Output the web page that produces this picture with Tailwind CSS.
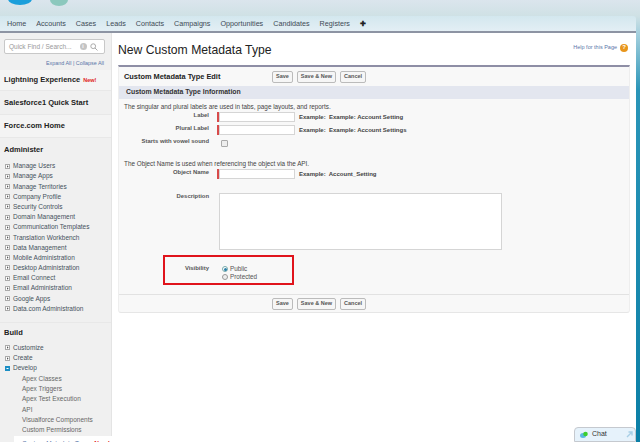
<!doctype html>
<html><head><meta charset="utf-8"><script src="https://cdn.jsdelivr.net/npm/@tailwindcss/browser@4"></script></head>
<body class="m-0">
<div class="relative w-[640px] h-[442px] overflow-hidden flex flex-col font-['Liberation_Sans',Arial,sans-serif] text-[6.35px] text-[#333] bg-[linear-gradient(180deg,#dbe5ed_0px,#cfe1e5_16px,#a9d2df_32px,#2a95b8_90px,#0b7fa6_442px)]">
  <div class="h-[16px] shrink-0 relative">
    <svg class="absolute left-[8px] top-0" width="64" height="7" viewBox="0 0 64 7"><ellipse cx="12" cy="-1" rx="12" ry="6" fill="#1b9fdb"/><ellipse cx="51" cy="0" rx="9" ry="6" fill="#8cc8bd"/></svg>
  </div>
  <div class="h-[17px] shrink-0 mr-[4px] rounded-tr-[3px] bg-gradient-to-b from-[#d3e7ee] to-[#e3eff5] border-b-2 border-[#8d94a3] flex items-center pl-[7px] pt-[1px] gap-[10px] text-[7.2px] text-[#3d4a55]">
    <span>Home</span><span>Accounts</span><span>Cases</span><span>Leads</span><span>Contacts</span><span>Campaigns</span><span>Opportunities</span><span>Candidates</span><span>Registers</span><span class="font-bold text-[#222]">✚</span>
  </div>
  <div class="flex-1 mr-[4px] flex min-h-0 bg-white">
    <aside class="w-[112px] shrink-0 bg-[#f0f0f0] border-r border-[#e4e4e4] flex flex-col">
      <div class="h-[37px] shrink-0 px-[4px] pt-[6px]">
        <div class="h-[15px] w-[101px] bg-white border border-[#c8c8c8] rounded-[2px] flex items-center pl-[4px] text-[#999] text-[6.5px] whitespace-nowrap">Quick Find / Search...
          <span class="ml-[8px] w-[7px] h-[7px] shrink-0 rounded-full bg-[#c4c4c4] text-white text-[5px] font-bold flex items-center justify-center">i</span>
          <svg class="ml-[3px] shrink-0" width="8" height="8" viewBox="0 0 8 8" fill="none" stroke="#aaa" stroke-width="1"><circle cx="3.2" cy="3.2" r="2.4"/><path d="M5 5l2.5 2.5"/></svg>
        </div>
        <div class="text-right pr-[3px] text-[5.4px] text-[#5a76a8] mt-[5px] whitespace-nowrap">Expand All | Collapse All</div>
      </div>
      <div class="h-[21px] shrink-0 flex items-center pl-[4px] text-[7.5px] font-bold text-[#222] border-b border-[#e8e8e8] bg-[#f4f4f4]">Lightning Experience<span class="ml-[3px] text-[5.5px] text-[#e02020]">New!</span></div>
      <div class="h-[24px] shrink-0 flex items-center pl-[4px] text-[7.5px] font-bold text-[#222] border-b border-[#e8e8e8]">Salesforce1 Quick Start</div>
      <div class="h-[23px] shrink-0 flex items-center pl-[4px] text-[7.5px] font-bold text-[#222] border-b border-[#e8e8e8] bg-[#f4f4f4]">Force.com Home</div>
      <div class="h-[23px] shrink-0 flex items-center pl-[4px] text-[7.5px] font-bold text-[#222]">Administer</div>
      <ul class="flex flex-col text-[6.5px] text-[#45505c] pb-[8px] border-b border-[#e8e8e8]">
        <li class="h-[10.2px] flex items-center pl-[5px] gap-[3px]"><svg class="shrink-0" width="5" height="5" viewBox="0 0 5 5"><rect x=".5" y=".5" width="4" height="4" fill="#fff" stroke="#aaa" stroke-width="1"/><path d="M2 1.2L3.6 2.5 2 3.8z" fill="#555"/></svg>Manage Users</li>
        <li class="h-[10.2px] flex items-center pl-[5px] gap-[3px]"><svg class="shrink-0" width="5" height="5" viewBox="0 0 5 5"><rect x=".5" y=".5" width="4" height="4" fill="#fff" stroke="#aaa" stroke-width="1"/><path d="M2 1.2L3.6 2.5 2 3.8z" fill="#555"/></svg>Manage Apps</li>
        <li class="h-[10.2px] flex items-center pl-[5px] gap-[3px]"><svg class="shrink-0" width="5" height="5" viewBox="0 0 5 5"><rect x=".5" y=".5" width="4" height="4" fill="#fff" stroke="#aaa" stroke-width="1"/><path d="M2 1.2L3.6 2.5 2 3.8z" fill="#555"/></svg>Manage Territories</li>
        <li class="h-[10.2px] flex items-center pl-[5px] gap-[3px]"><svg class="shrink-0" width="5" height="5" viewBox="0 0 5 5"><rect x=".5" y=".5" width="4" height="4" fill="#fff" stroke="#aaa" stroke-width="1"/><path d="M2 1.2L3.6 2.5 2 3.8z" fill="#555"/></svg>Company Profile</li>
        <li class="h-[10.2px] flex items-center pl-[5px] gap-[3px]"><svg class="shrink-0" width="5" height="5" viewBox="0 0 5 5"><rect x=".5" y=".5" width="4" height="4" fill="#fff" stroke="#aaa" stroke-width="1"/><path d="M2 1.2L3.6 2.5 2 3.8z" fill="#555"/></svg>Security Controls</li>
        <li class="h-[10.2px] flex items-center pl-[5px] gap-[3px]"><svg class="shrink-0" width="5" height="5" viewBox="0 0 5 5"><rect x=".5" y=".5" width="4" height="4" fill="#fff" stroke="#aaa" stroke-width="1"/><path d="M2 1.2L3.6 2.5 2 3.8z" fill="#555"/></svg>Domain Management</li>
        <li class="h-[10.2px] flex items-center pl-[5px] gap-[3px]"><svg class="shrink-0" width="5" height="5" viewBox="0 0 5 5"><rect x=".5" y=".5" width="4" height="4" fill="#fff" stroke="#aaa" stroke-width="1"/><path d="M2 1.2L3.6 2.5 2 3.8z" fill="#555"/></svg>Communication Templates</li>
        <li class="h-[10.2px] flex items-center pl-[5px] gap-[3px]"><svg class="shrink-0" width="5" height="5" viewBox="0 0 5 5"><rect x=".5" y=".5" width="4" height="4" fill="#fff" stroke="#aaa" stroke-width="1"/><path d="M2 1.2L3.6 2.5 2 3.8z" fill="#555"/></svg>Translation Workbench</li>
        <li class="h-[10.2px] flex items-center pl-[5px] gap-[3px]"><svg class="shrink-0" width="5" height="5" viewBox="0 0 5 5"><rect x=".5" y=".5" width="4" height="4" fill="#fff" stroke="#aaa" stroke-width="1"/><path d="M2 1.2L3.6 2.5 2 3.8z" fill="#555"/></svg>Data Management</li>
        <li class="h-[10.2px] flex items-center pl-[5px] gap-[3px]"><svg class="shrink-0" width="5" height="5" viewBox="0 0 5 5"><rect x=".5" y=".5" width="4" height="4" fill="#fff" stroke="#aaa" stroke-width="1"/><path d="M2 1.2L3.6 2.5 2 3.8z" fill="#555"/></svg>Mobile Administration</li>
        <li class="h-[10.2px] flex items-center pl-[5px] gap-[3px]"><svg class="shrink-0" width="5" height="5" viewBox="0 0 5 5"><rect x=".5" y=".5" width="4" height="4" fill="#fff" stroke="#aaa" stroke-width="1"/><path d="M2 1.2L3.6 2.5 2 3.8z" fill="#555"/></svg>Desktop Administration</li>
        <li class="h-[10.2px] flex items-center pl-[5px] gap-[3px]"><svg class="shrink-0" width="5" height="5" viewBox="0 0 5 5"><rect x=".5" y=".5" width="4" height="4" fill="#fff" stroke="#aaa" stroke-width="1"/><path d="M2 1.2L3.6 2.5 2 3.8z" fill="#555"/></svg>Email Connect</li>
        <li class="h-[10.2px] flex items-center pl-[5px] gap-[3px]"><svg class="shrink-0" width="5" height="5" viewBox="0 0 5 5"><rect x=".5" y=".5" width="4" height="4" fill="#fff" stroke="#aaa" stroke-width="1"/><path d="M2 1.2L3.6 2.5 2 3.8z" fill="#555"/></svg>Email Administration</li>
        <li class="h-[10.2px] flex items-center pl-[5px] gap-[3px]"><svg class="shrink-0" width="5" height="5" viewBox="0 0 5 5"><rect x=".5" y=".5" width="4" height="4" fill="#fff" stroke="#aaa" stroke-width="1"/><path d="M2 1.2L3.6 2.5 2 3.8z" fill="#555"/></svg>Google Apps</li>
        <li class="h-[10.2px] flex items-center pl-[5px] gap-[3px]"><svg class="shrink-0" width="5" height="5" viewBox="0 0 5 5"><rect x=".5" y=".5" width="4" height="4" fill="#fff" stroke="#aaa" stroke-width="1"/><path d="M2 1.2L3.6 2.5 2 3.8z" fill="#555"/></svg>Data.com Administration</li>
      </ul>
      <div class="h-[20px] shrink-0 flex items-center pl-[4px] text-[7.5px] font-bold text-[#222]">Build</div>
      <ul class="flex flex-col text-[6.5px] text-[#45505c]">
        <li class="h-[10.2px] flex items-center pl-[5px] gap-[3px]"><svg class="shrink-0" width="5" height="5" viewBox="0 0 5 5"><rect x=".5" y=".5" width="4" height="4" fill="#fff" stroke="#aaa" stroke-width="1"/><path d="M2 1.2L3.6 2.5 2 3.8z" fill="#555"/></svg>Customize</li>
        <li class="h-[10.2px] flex items-center pl-[5px] gap-[3px]"><svg class="shrink-0" width="5" height="5" viewBox="0 0 5 5"><rect x=".5" y=".5" width="4" height="4" fill="#fff" stroke="#aaa" stroke-width="1"/><path d="M2 1.2L3.6 2.5 2 3.8z" fill="#555"/></svg>Create</li>
        <li class="h-[10.2px] flex items-center pl-[5px] gap-[3px]"><svg class="shrink-0" width="5" height="5" viewBox="0 0 5 5"><rect width="5" height="5" fill="#1b8ec4"/><rect x="1.5" y="2" width="2" height="1" fill="#fff"/></svg>Develop</li>
        <li class="h-[10.2px] flex items-center pl-[22px] text-[#666] mt-[.5px]">Apex Classes</li>
        <li class="h-[10.2px] flex items-center pl-[22px] text-[#666]">Apex Triggers</li>
        <li class="h-[10.2px] flex items-center pl-[22px] text-[#666]">Apex Test Execution</li>
        <li class="h-[10.2px] flex items-center pl-[22px] text-[#666]">API</li>
        <li class="h-[10.2px] flex items-center pl-[22px] text-[#666]">Visualforce Components</li>
        <li class="h-[10.2px] flex items-center pl-[22px] text-[#666]">Custom Permissions</li>
        <li class="h-[12px] flex items-center ml-[14px] -mr-[1px] mt-[1px] bg-white pl-[8px] pt-[4px] text-[#5a76a8] whitespace-nowrap">Custom Metadata Types<span class="ml-[2px] text-[#e02020] font-bold">New!</span></li>
      </ul>
    </aside>
    <main class="flex-1 min-w-0 pl-[6px] pr-[6px]">
      <div class="h-[32px] flex items-center justify-between">
        <h1 class="text-[12.2px] text-[#222] font-normal pt-[2px]">New Custom Metadata Type</h1>
        <div class="flex items-center gap-[3px] text-[5.5px] text-[#5a76a8] mr-[2px] -mt-[3px]">Help for this Page<span class="w-[8px] h-[8px] rounded-full bg-[#e8961c] text-white text-[6px] font-bold flex items-center justify-center">?</span></div>
      </div>
      <section class="border-t-2 border-[#8e8ea5] bg-[#f8f8f8] rounded-b-[3px] border-x border-b border-x-[#eee] border-b-[#e6e6e6]">
        <div class="h-[19px] flex items-center pl-[5px]">
          <div class="w-[148px] text-[7.4px] font-bold text-[#222] whitespace-nowrap">Custom Metadata Type Edit</div>
          <div class="flex gap-[4px] text-[5.5px] font-bold text-[#555]">
            <button class="h-[12px] px-[3px] bg-[#f6f6f6] border border-[#bbb] rounded-[2px]">Save</button>
            <button class="h-[12px] px-[3px] bg-[#f6f6f6] border border-[#bbb] rounded-[2px]">Save &amp; New</button>
            <button class="h-[12px] px-[3px] bg-[#f6f6f6] border border-[#bbb] rounded-[2px]">Cancel</button>
          </div>
        </div>
        <div class="h-[13px] bg-[#e3e6ef] flex items-center pl-[7px] text-[6.9px] font-bold text-[#333]">Custom Metadata Type Information</div>
        <div class="pt-[3px] pl-[5px] h-[10px] leading-[10px] text-[#444] whitespace-nowrap">The singular and plural labels are used in tabs, page layouts, and reports.</div>
        <div class="h-[13px] flex items-center mt-[1.5px]">
          <div class="w-[90px] text-right font-bold text-[#555] text-[5.9px] -mt-[4px]">Label</div>
          <div class="ml-[8px] w-[1.5px] h-[10px] bg-[#d84a4a]"></div>
          <div class="w-[76px] h-[10px] bg-white border border-[#d5d5d5]"></div>
          <div class="ml-[4.5px] font-bold text-[#444] text-[6px]">Example:&nbsp; Example: Account Setting</div>
        </div>
        <div class="h-[13px] flex items-center">
          <div class="w-[90px] text-right font-bold text-[#555] text-[5.9px] -mt-[4px]">Plural Label</div>
          <div class="ml-[8px] w-[1.5px] h-[10px] bg-[#d84a4a]"></div>
          <div class="w-[76px] h-[10px] bg-white border border-[#d5d5d5]"></div>
          <div class="ml-[4.5px] font-bold text-[#444] text-[6px]">Example:&nbsp; Example: Account Settings</div>
        </div>
        <div class="h-[13px] flex items-center">
          <div class="w-[90px] text-right font-bold text-[#555] text-[5.9px] whitespace-nowrap -mt-[4px]">Starts with vowel sound</div>
          <div class="ml-[12px] w-[7px] h-[7px] bg-[#eee] border border-[#aaa] rounded-[1px]"></div>
        </div>
        <div class="mt-[9.5px] pl-[5px] h-[10px] leading-[10px] text-[#444] whitespace-nowrap">The Object Name is used when referencing the object via the API.</div>
        <div class="h-[13px] flex items-center -mt-[1.5px]">
          <div class="w-[90px] text-right font-bold text-[#555] text-[5.9px] -mt-[4px]">Object Name</div>
          <div class="ml-[8px] w-[1.5px] h-[10px] bg-[#d84a4a]"></div>
          <div class="w-[76px] h-[10px] bg-white border border-[#d5d5d5]"></div>
          <div class="ml-[4.5px] font-bold text-[#444] text-[6px]">Example:&nbsp; Account_Setting</div>
        </div>
        <div class="flex mt-[12.5px]">
          <div class="w-[90px] text-right font-bold text-[#555] text-[5.9px] -mt-[1px]">Description</div>
          <div class="ml-[10px] w-[283px] h-[57px] bg-white border border-[#d5d5d5]"></div>
        </div>
        <div class="ml-[44px] mt-[5px] w-[131px] h-[30px] border-2 border-[#e0141c] flex">
          <div class="w-[44px] text-right font-bold text-[#555] text-[5.9px] mt-[7px]">Visibility</div>
          <div class="ml-[13px] flex flex-col text-[6.35px] text-[#555] mt-[8px]">
            <label class="h-[8px] flex items-center gap-[2px]"><span class="w-[6px] h-[6px] rounded-full bg-white border border-[#7aa] flex items-center justify-center"><span class="w-[3px] h-[3px] rounded-full bg-[#2a7fa8]"></span></span>Public</label>
            <label class="h-[8px] flex items-center gap-[2px]"><span class="w-[6px] h-[6px] rounded-full bg-[#eee] border border-[#999]"></span>Protected</label>
          </div>
        </div>
        <div class="mt-[9px] h-[18px] border-t border-[#e2e2e2] flex items-center gap-[4px] pl-[153px] text-[5.5px] font-bold text-[#555]">
          <button class="h-[12px] px-[3px] bg-[#f6f6f6] border border-[#bbb] rounded-[2px]">Save</button>
          <button class="h-[12px] px-[3px] bg-[#f6f6f6] border border-[#bbb] rounded-[2px]">Save &amp; New</button>
          <button class="h-[12px] px-[3px] bg-[#f6f6f6] border border-[#bbb] rounded-[2px]">Cancel</button>
        </div>
      </section>
    </main>
  </div>
  <div class="absolute left-[574px] top-[427px] w-[62px] h-[15px] bg-[#e6f2fb] border border-[#c5c9cf] rounded-t-[4px] flex items-center pl-[5px] gap-[2px] text-[7px] text-[#333]">
    <svg width="8" height="8" viewBox="0 0 8 8"><ellipse cx="3" cy="4.5" rx="3" ry="2.5" fill="#5bb7e0"/><circle cx="5.5" cy="3" r="2.3" fill="#3ccf2e"/></svg>
    <span class="ml-[2px]">Chat</span>
    <svg class="ml-auto mr-[2px]" width="7" height="7" viewBox="0 0 7 7" fill="none" stroke="#a8cfe6" stroke-width="1.4"><path d="M1 6L6 1M2.5 1H6V4.5"/></svg>
  </div>
</div>
</body></html>
